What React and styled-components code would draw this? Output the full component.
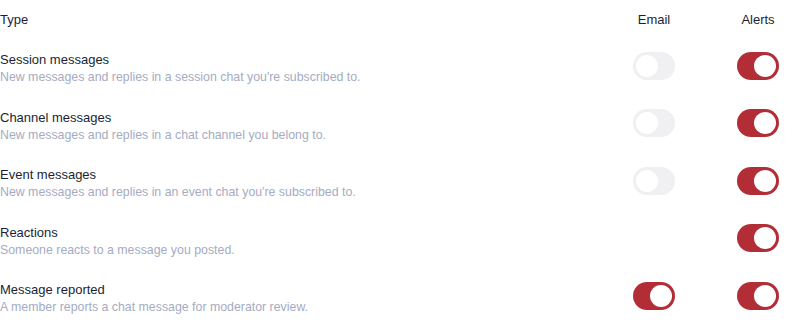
import React, { useState } from "react";
import styled, { createGlobalStyle } from "styled-components";

const GlobalStyle = createGlobalStyle`
  html, body {
    margin: 0;
    padding: 0;
    background: #ffffff;
    font-family: "Liberation Sans", Arial, Helvetica, sans-serif;
  }
`;

const Table = styled.div`
  display: grid;
  grid-template-columns: 1fr 84px 84px;
  column-gap: 20px;
  padding-right: 4px;
  width: 804px;
  box-sizing: border-box;
`;

const HeadCell = styled.div`
  height: 39px;
  display: flex;
  align-items: center;
  justify-content: ${(p) => (p.center ? "center" : "flex-start")};
  font-size: 13px;
  line-height: 17px;
  color: #1a1f36;
`;

const Info = styled.div`
  padding: 12px 0 10.5px;
  display: flex;
  flex-direction: column;
`;

const Title = styled.div`
  font-size: 13px;
  line-height: 18px;
  color: #1a1f36;
`;

const Desc = styled.div`
  font-size: 12.35px;
  line-height: 17px;
  color: #a5abc2;
`;

const Cell = styled.div`
  display: flex;
  align-items: center;
  justify-content: center;
  padding-bottom: 4px;
`;

const Track = styled.button`
  position: relative;
  width: 42px;
  height: 28px;
  padding: 0;
  border: none;
  border-radius: 14px;
  cursor: pointer;
  background: ${(p) => (p.on ? "#b32d37" : "#f0f0f3")};
  transition: background 0.2s ease;
`;

const Knob = styled.span`
  position: absolute;
  top: 3px;
  left: ${(p) => (p.on ? "17px" : "3px")};
  width: 22px;
  height: 22px;
  border-radius: 50%;
  background: #ffffff;
  transition: left 0.2s ease;
`;

function Toggle({ on, onClick }) {
  return (
    <Track role="switch" aria-checked={on} on={on ? 1 : 0} onClick={onClick}>
      <Knob on={on ? 1 : 0} />
    </Track>
  );
}

const rows = [
  {
    title: "Session messages",
    desc: "New messages and replies in a session chat you're subscribed to.",
    email: false,
    alerts: true,
  },
  {
    title: "Channel messages",
    desc: "New messages and replies in a chat channel you belong to.",
    email: false,
    alerts: true,
  },
  {
    title: "Event messages",
    desc: "New messages and replies in an event chat you're subscribed to.",
    email: false,
    alerts: true,
  },
  {
    title: "Reactions",
    desc: "Someone reacts to a message you posted.",
    email: null,
    alerts: true,
  },
  {
    title: "Message reported",
    desc: "A member reports a chat message for moderator review.",
    email: true,
    alerts: true,
  },
];

export default function App() {
  const [state, setState] = useState(rows);

  const flip = (i, key) => {
    setState((s) => s.map((r, j) => (j === i ? { ...r, [key]: !r[key] } : r)));
  };

  return (
    <>
      <GlobalStyle />
      <Table>
        <HeadCell>Type</HeadCell>
        <HeadCell center>Email</HeadCell>
        <HeadCell center>Alerts</HeadCell>
        {state.map((r, i) => (
          <React.Fragment key={r.title}>
            <Info>
              <Title>{r.title}</Title>
              <Desc>{r.desc}</Desc>
            </Info>
            <Cell>
              {r.email !== null && (
                <Toggle on={r.email} onClick={() => flip(i, "email")} />
              )}
            </Cell>
            <Cell>
              <Toggle on={r.alerts} onClick={() => flip(i, "alerts")} />
            </Cell>
          </React.Fragment>
        ))}
      </Table>
    </>
  );
}
